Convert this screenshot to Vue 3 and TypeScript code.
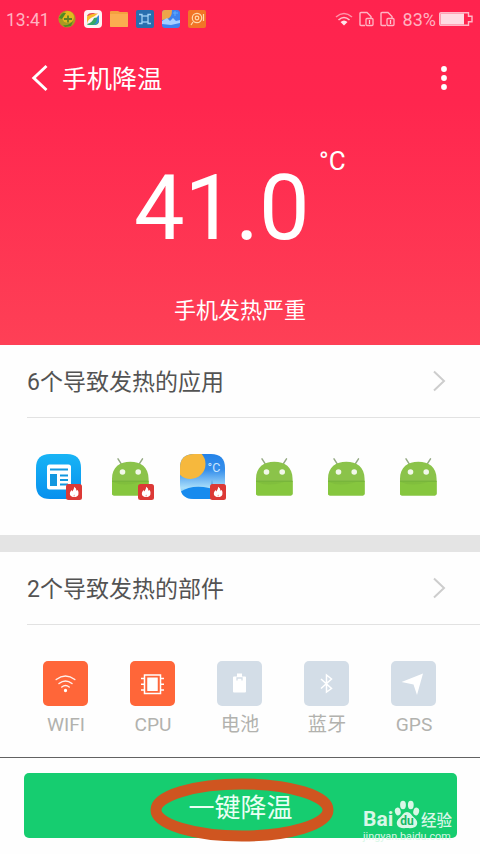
<script setup lang="ts">
interface AppItem {
  kind: 'news' | 'android' | 'weather'
  hot: boolean
}
interface Part {
  label: string
  icon: 'wifi' | 'cpu' | 'battery' | 'bluetooth' | 'gps'
  hot: boolean
}

const apps: AppItem[] = [
  { kind: 'news', hot: true },
  { kind: 'android', hot: true },
  { kind: 'weather', hot: true },
  { kind: 'android', hot: false },
  { kind: 'android', hot: false },
  { kind: 'android', hot: false },
]

const parts: Part[] = [
  { label: 'WIFI', icon: 'wifi', hot: true },
  { label: 'CPU', icon: 'cpu', hot: true },
  { label: '电池', icon: 'battery', hot: false },
  { label: '蓝牙', icon: 'bluetooth', hot: false },
  { label: 'GPS', icon: 'gps', hot: false },
]
</script>

<template>
  <div class="phone">
    <header class="hero">
      <div class="status">
        <span class="clock">13:41</span>
        <div class="notices">
          <svg viewBox="0 0 18 18">
            <circle cx="9" cy="9" r="8.6" fill="#a99b22" />
            <circle cx="10" cy="7" r="6" fill="#e3b91f" />
            <path d="M1 8q3-6 7-5l-4 6zM5 15q6 1 10-4l-2 5-6 1z" fill="#4f8a25" />
            <path d="M6 9h8M10 5.500v7" stroke="#5b8224" stroke-width="1.800" />
          </svg>
          <svg viewBox="0 0 18 18">
            <rect width="18" height="18" rx="4" fill="#fff3f4" />
            <path d="M3 6q1-3 5-3h6q-5 0-8 4z" fill="#e94c50" />
            <path d="M3 6.500v7q1-5 7-7l4-3q-7 0-11 3" fill="#f6bd2a" />
            <path d="M3 14q5-1 7-6l5-1v5q-1 3-4 3H5q-2 0-2-1" fill="#35a968" />
            <path d="M15 5v6q-2 4-6 4 5-3 4-8z" fill="#358adf" />
          </svg>
          <svg viewBox="0 0 18 18">
            <path d="M0 2q0-1 1-1h7l2 1h7q1 0 1 1v13q0 1-1 1H1q-1 0-1-1z" fill="#f4a13f" />
            <path d="M0 4h18v12q0 1-1 1H1q-1 0-1-1z" fill="#fbad50" />
          </svg>
          <svg viewBox="0 0 18 18">
            <rect width="18" height="18" rx="2" fill="#286fae" />
            <g fill="none" stroke="#9ed0f5" stroke-width="1.300">
              <rect x="6" y="6" width="6" height="6" />
              <path d="M3 4.500h3V6M15 4.500h-3V6M3 13.500h3V12M15 13.500h-3V12" />
            </g>
          </svg>
          <svg viewBox="0 0 18 18">
            <rect width="18" height="18" rx="3" fill="#3d82ee" />
            <path d="M0 3q0-3 3-3h7q0 8-5 9l-5 1z" fill="#eda54a" />
            <path d="M0 11l5-3 3 3 3-3 3 3 4-1v3l-9 2-9-1z" fill="#a5ceff" />
            <path d="M11 3h5M13 1v5" stroke="#5eabff" />
          </svg>
          <svg viewBox="0 0 18 18">
            <rect width="18" height="18" rx="2" fill="#f27527" />
            <g fill="none" stroke="#ffd9ad" stroke-width="1.200">
              <circle cx="9" cy="8" r="4.700" />
              <circle cx="9" cy="8" r="1.800" />
              <path d="M5 12l-2 3M15.500 4v7" />
            </g>
          </svg>
        </div>
        <div class="signals">
          <svg class="wave" viewBox="0 0 18 14">
            <g fill="none" stroke="#ffc2ce" stroke-width="1.600">
              <path d="M1 5q8-7 16 0" opacity=".7" />
              <path d="M3.500 8q5.500-5 11 0" />
            </g>
            <path d="M5.500 10q3.500-3 7 0L9 13.500z" fill="#ffe5ea" />
          </svg>
          <svg v-for="n in 2" :key="n" class="sim" viewBox="0 0 15 16">
            <path d="M6 14.500H2q-1 0-1-1v-11q0-1 1-1h6l4 4v2" fill="none" stroke="#ffb5c4" stroke-width="1.400" />
            <rect x="7" y="7.500" width="7" height="7" rx="1" fill="none" stroke="#ffb5c4" stroke-width="1.300" />
            <path d="M10.500 9v4" stroke="#ffc8d3" stroke-width="1.300" />
          </svg>
          <span class="percent">83%</span>
          <svg class="cell" viewBox="0 0 34 14">
            <path d="M2 .7h27.500v3.500H33v5.600h-3.500v3.500H2q-1.300 0-1.300-1.300V2Q.7.700 2 .7z" fill="none" stroke="#ffb9c7" stroke-width="1.400" />
            <rect x="1.500" y="1.500" width="23.500" height="11" fill="#ffdce3" />
          </svg>
        </div>
      </div>

      <nav class="titlebar">
        <svg class="back" viewBox="0 0 18 28">
          <path d="M15.500 2L2.800 14l12.700 12" fill="none" stroke="#fff" stroke-width="2.900" />
        </svg>
        <h1>手机降温</h1>
        <svg class="more" viewBox="0 0 6 24">
          <circle cx="3" cy="3" r="2.900" />
          <circle cx="3" cy="12" r="2.900" />
          <circle cx="3" cy="21" r="2.900" />
        </svg>
      </nav>

      <div class="reading">
        <span class="degrees">41.0</span><span class="unit">°C</span>
      </div>
      <p class="verdict">手机发热严重</p>
    </header>

    <section class="apps">
      <div class="heading">
        <h2>6个导致发热的应用</h2>
        <svg class="chevron" viewBox="0 0 14 22"><path d="M2 1.500L12 11 2 20.500" /></svg>
      </div>
      <div class="app-row">
        <div v-for="(app, i) in apps" :key="i" class="app">
          <svg v-if="app.kind === 'news'" viewBox="0 0 45 45">
            <defs>
              <linearGradient id="news" x2="0" y2="1"><stop stop-color="#18b4f5" /><stop offset="1" stop-color="#0790ee" /></linearGradient>
            </defs>
            <path d="M14 0h17q14 0 14 14v17q0 14-14 14H14Q0 45 0 31V14Q0 0 14 0" fill="url(#news)" />
            <rect x="11" y="10.500" width="24" height="25" rx="2.500" fill="#fff" />
            <path d="M14 15.500h18M24 21.500h8M24 26h8M24 30.500h8" stroke="#1297df" stroke-width="2.200" />
            <path d="M14 20h7v12h-7z" fill="#1297df" />
          </svg>
          <svg v-else-if="app.kind === 'weather'" viewBox="0 0 45 45">
            <defs>
              <linearGradient id="sky" x2="0" y2="1">
                <stop stop-color="#2483e8" /><stop offset=".35" stop-color="#358eeb" />
                <stop offset=".75" stop-color="#a9defa" /><stop offset="1" stop-color="#5fb6f4" />
              </linearGradient>
              <clipPath id="tile"><path d="M14 0h17q14 0 14 14v17q0 14-14 14H14Q0 45 0 31V14Q0 0 14 0" /></clipPath>
            </defs>
            <g clip-path="url(#tile)">
              <rect width="45" height="45" fill="url(#sky)" />
              <circle cx="10.500" cy="10" r="15" fill="#f6b83d" />
              <path d="M0 38q12-8 29-4l16 4v7H0z" fill="#178bee" />
              <path d="M31 36l1-10 1 10z" fill="#2878c8" />
            </g>
            <text x="27.500" y="18" class="tile-unit">°C</text>
          </svg>
          <svg v-else viewBox="0 0 45 45">
            <path d="M10 4.800l4.500 7M34.500 4.800l-4.500 7" stroke="#94a983" stroke-width="1.500" stroke-linecap="round" />
            <path d="M4 41V25C4 13 12 7.800 22.300 7.800S40.600 13 40.600 25v14.500q0 2-2 2H6q-2 0-2-2z" fill="#8bc34a" />
            <path d="M4 27h36.600v12.500q0 2-2 2H6q-2 0-2-2z" fill="#86c63e" />
            <path d="M4 27.200h36.600" stroke="#71ad3b" stroke-width=".9" />
            <path d="M5 28q10 5 27 .3z" fill="#78b13d" opacity=".4" />
            <circle cx="14.500" cy="18" r="2.800" fill="#f2f8e9" />
            <circle cx="30.200" cy="18" r="2.800" fill="#f2f8e9" />
          </svg>
          <svg v-if="app.hot" class="flame" viewBox="0 0 16 16">
            <rect width="16" height="16" rx="2.500" fill="#dc3936" />
            <path d="M8 13C4.500 13 3.200 10.500 4.200 8L5.500 6l.8 1.400Q8 5.800 8.300 2.800q2.200 1.400 2.200 4l1.200-.8q1.400 2.400.7 4.400-1 2.600-4.400 2.600" fill="#fff" />
            <path d="M8 12.800q-1-1 .2-2.300 1.100 1.300-.2 2.300" fill="#e8706c" />
          </svg>
        </div>
      </div>
    </section>

    <section class="parts">
      <div class="heading">
        <h2>2个导致发热的部件</h2>
        <svg class="chevron" viewBox="0 0 14 22"><path d="M2 1.500L12 11 2 20.500" /></svg>
      </div>
      <div class="part-row">
        <div v-for="part in parts" :key="part.icon" class="part">
          <div class="tile" :class="{ hot: part.hot }">
            <svg viewBox="0 0 45 45">
              <g v-if="part.icon === 'wifi'" fill="none" stroke="#fff" stroke-width="1.500" stroke-linecap="round">
                <path d="M13.200 18.500q9.300-7 18.600 0M16 22.500q6.500-5 13 0M18.800 26q3.700-2.800 7.400 0" opacity=".9" />
                <circle cx="22.500" cy="29.500" r=".9" fill="#fff" />
              </g>
              <g v-else-if="part.icon === 'cpu'" stroke="#fff" fill="none">
                <rect x="14.500" y="14" width="16" height="18.500" stroke-width="1.500" />
                <rect x="17.800" y="17" width="9.400" height="12.500" fill="#fff" stroke-width="1" />
                <path d="M11 17.500h4M11 23.300h4M11 29h4M30 17.500h4M30 23.300h4M30 29h4" stroke-width="1.500" />
              </g>
              <g v-else-if="part.icon === 'battery'">
                <path d="M20 12.500h5v3h3q1 0 1 1v14q0 1-1 1H17q-1 0-1-1v-14q0-1 1-1h3z" fill="#fff" />
                <path d="M20 19.500v-2.500h5v2.500" fill="none" stroke="#d3dde7" stroke-width="1.300" />
              </g>
              <path v-else-if="part.icon === 'bluetooth'" d="M17 18l10.500 9.500-5 3.500V14l5 4L17 27.500" fill="none" stroke="#fff" stroke-width="1.500" />
              <path v-else d="M32 12.500L26 34l-3.500-10.500L10.500 21z" fill="#fff" />
            </svg>
          </div>
          <span>{{ part.label }}</span>
        </div>
      </div>
    </section>

    <footer class="footer">
      <button class="cool">一键降温</button>
      <svg class="ring" viewBox="0 0 184 64">
        <ellipse cx="92" cy="32" rx="86" ry="26" />
      </svg>
      <div class="mark">
        <div class="brand">
          <span class="bai">Bai</span>
          <svg viewBox="0 0 26 29">
            <g fill="#d9f7e7">
              <ellipse cx="3.800" cy="11.500" rx="2.900" ry="3.900" transform="rotate(-15 3.800 11.500)" />
              <ellipse cx="9" cy="5" rx="2.900" ry="4.200" />
              <ellipse cx="16.800" cy="5" rx="2.900" ry="4.200" />
              <ellipse cx="22.200" cy="11.500" rx="2.900" ry="3.900" transform="rotate(15 22.200 11.500)" />
              <path d="M13 12c3 0 4.500 3 6.500 5s4.500 4 3.500 7.500-5 4-10 3.500c-5 .5-9 0-10-3.500S4.500 19 6.500 17s3.500-5 6.500-5" />
            </g>
            <text x="13" y="25" class="du">du</text>
          </svg>
          <span class="jy">经验</span>
        </div>
        <div class="site">jingyan.baidu.com</div>
      </div>
    </footer>
  </div>
</template>

<style>
body {
  background: #fff;
}
</style>

<style scoped>
.phone {
  width: 480px;
  height: 854px;
  display: flex;
  flex-direction: column;
  overflow: hidden;
  background: #fefefe;
  font-family: Roboto, 'Noto Sans CJK SC', sans-serif;
}
svg {
  display: block;
  flex: none;
}
h1,
h2,
p {
  margin: 0;
  font-weight: 400;
}
.hero {
  height: 345px;
  flex: none;
  display: flex;
  flex-direction: column;
  color: #fff;
  background: linear-gradient(#ff234e, #ff264e 30%, #fe4056);
}
.status {
  height: 38px;
  display: flex;
  align-items: center;
  padding: 0 7px 0 6px;
  font-size: 18px;
  color: #ffb3c1;
}
.clock {
  width: 52px;
  font-size: 17.5px;
  line-height: 20px;
  padding-top: 2px;
}
.notices {
  display: flex;
  gap: 8px;
}
.notices svg {
  width: 18px;
  height: 18px;
}
.signals {
  margin-left: auto;
  display: flex;
  align-items: center;
}
.wave {
  width: 18px;
  height: 14px;
}
.sim {
  width: 15px;
  height: 16px;
  margin-left: 6px;
}
.percent {
  margin: 2px 3px 0 8px;
  line-height: 20px;
}
.cell {
  width: 34px;
  height: 14px;
}
.titlebar {
  height: 80px;
  display: flex;
  align-items: center;
  padding: 0 33px 0 31px;
}
.back {
  width: 18px;
  height: 28px;
}
h1 {
  margin-left: 13px;
  padding-top: 3px;
  font-size: 25px;
  line-height: 36px;
}
.more {
  width: 6px;
  height: 24px;
  margin-left: auto;
  fill: #fff;
}
.reading {
  height: 168px;
  display: flex;
  padding: 27px 0 0 134px;
  box-sizing: border-box;
}
.degrees {
  width: 177px;
  font-size: 90px;
  line-height: 128px;
}
.unit {
  margin: 1px 0 0 8px;
  font-size: 26px;
  line-height: 30px;
}
.verdict {
  padding-top: 2px;
  text-align: center;
  font-size: 22px;
  line-height: 46px;
}
.apps {
  height: 190px;
  flex: none;
}
.parts {
  height: 223px;
  flex: none;
  box-sizing: border-box;
  border-top: 17px solid #e4e4e4;
  border-bottom: 1px solid #626262;
}
.heading {
  height: 73px;
  box-sizing: border-box;
  margin-left: 27px;
  padding: 0 34px 0 0;
  border-bottom: 1px solid #e2e2e2;
  display: flex;
  align-items: center;
  justify-content: space-between;
}
h2 {
  padding-top: 4px;
  font-size: 23px;
  line-height: 34px;
  color: #535353;
}
.chevron {
  width: 14px;
  height: 22px;
  fill: none;
  stroke: #cdcdcd;
  stroke-width: 2;
}
.app-row {
  display: flex;
  gap: 27px;
  padding: 36px 0 0 36px;
}
.app {
  position: relative;
  width: 45px;
  height: 45px;
}
.flame {
  position: absolute;
  right: -1px;
  bottom: -1px;
  width: 16px;
  height: 16px;
}
.tile-unit {
  font-size: 12.5px;
  fill: #cbe7ff;
}
.part-row {
  display: flex;
  gap: 27px;
  padding: 36px 0 0 35px;
}
.part {
  width: 60px;
  display: flex;
  flex-direction: column;
  align-items: center;
  font-size: 19.2px;
  line-height: 30px;
  color: #b2b2ae;
}
.part span {
  padding-left: 2px;
}
.tile {
  width: 45px;
  height: 45px;
  margin-bottom: 3.5px;
  border-radius: 5px;
  background: #d3dde7;
}
.hot {
  background: #ff6639;
}
.footer {
  position: relative;
  flex: 1;
  padding: 15.4px 24px 0;
}
.cool {
  display: block;
  width: 433px;
  height: 65px;
  padding: 0 0 1px;
  border: 0;
  border-radius: 5px;
  background: #16cd70;
  color: #eafff4;
  font: 26px 'Noto Sans CJK SC', sans-serif;
}
.ring {
  position: absolute;
  left: 150px;
  top: 20px;
  width: 184px;
  height: 64px;
  fill: none;
  stroke: #cf5520;
  stroke-width: 11;
}
.mark {
  position: absolute;
  left: 363px;
  top: 42px;
  color: #d9f7e7;
}
.brand {
  display: flex;
  align-items: flex-end;
  height: 29px;
}
.brand svg {
  width: 26px;
  height: 29px;
}
.bai {
  width: 31px;
  font: 700 21px/20px Roboto, sans-serif;
}
.du {
  font: 700 12px Roboto, sans-serif;
  fill: #16b765;
  text-anchor: middle;
}
.jy {
  margin-left: 1px;
  font: 500 15.5px/20px 'Noto Sans CJK SC', sans-serif;
}
.site {
  margin-top: 2px;
  font-size: 10.8px;
  line-height: 12px;
}
</style>
